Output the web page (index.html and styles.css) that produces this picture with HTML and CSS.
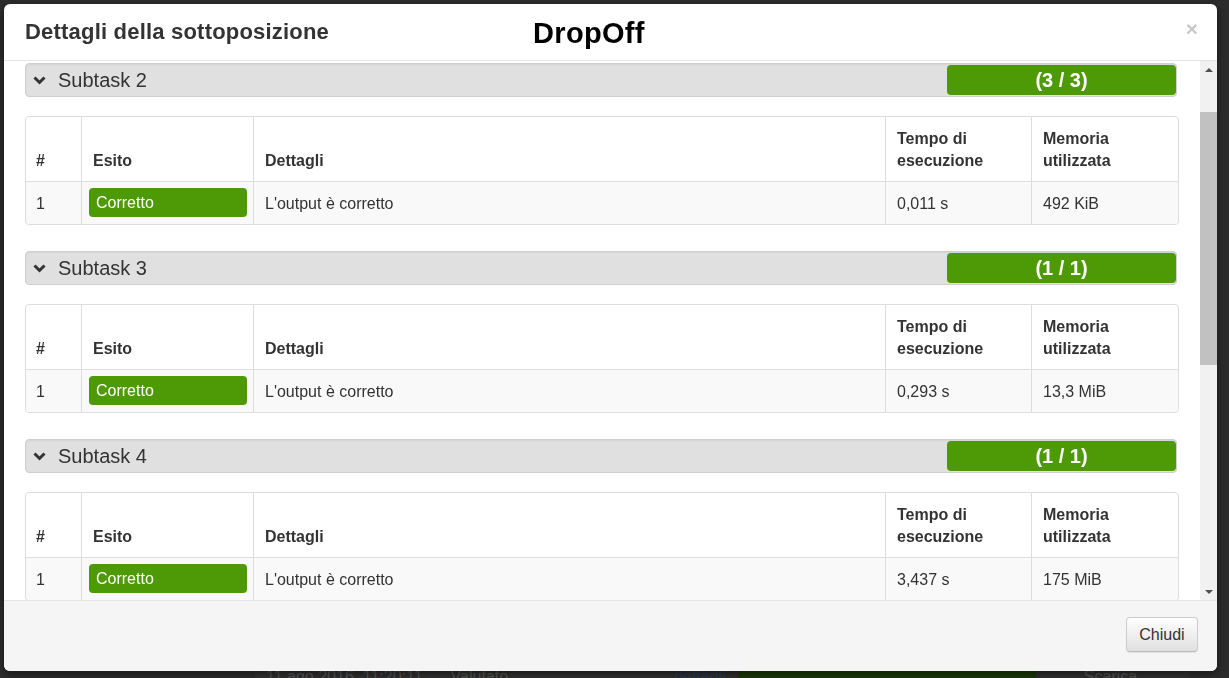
FILE: index.html
```html
<!DOCTYPE html>
<html lang="it">
<head>
<meta charset="utf-8">
<title>Dettagli della sottoposizione</title>
<link rel="stylesheet" href="styles.css">
</head>
<body>
<div class="page">
  <div class="page-row">
    <span class="pc pc-date">11 ago 2016, 11:20:11</span>
    <span class="pc pc-state">Valutato</span>
    <span class="pc pc-link">dettagli</span>
    <span class="pc pc-score"></span>
    <span class="pc pc-dl">Scarica</span>
  </div>
</div>

<div class="modal">
  <div class="modal-header">
    <h4 class="modal-title">Dettagli della sottoposizione</h4>
    <span class="task-name">DropOff</span>
    <button class="close" type="button">×</button>
  </div>

  <div class="modal-body-wrap">
    <div class="modal-body">

      <section class="subtask">
        <div class="subtask-head">
          <svg class="chev" viewBox="0 0 13 9" width="13" height="9"><polyline points="1.5,1.5 6.5,6.5 11.5,1.5" fill="none" stroke="#333" stroke-width="3"/></svg>
          <span class="subtask-title">Subtask 2</span>
          <span class="score">(3 / 3)</span>
        </div>
        <table class="tc">
          <colgroup><col class="c1"><col class="c2"><col class="c3"><col class="c4"><col class="c5"></colgroup>
          <thead><tr><th>#</th><th>Esito</th><th>Dettagli</th><th>Tempo di esecuzione</th><th>Memoria utilizzata</th></tr></thead>
          <tbody><tr><td>1</td><td class="lc"><span class="label">Corretto</span></td><td>L'output è corretto</td><td>0,011 s</td><td>492 KiB</td></tr></tbody>
        </table>
      </section>

      <section class="subtask">
        <div class="subtask-head">
          <svg class="chev" viewBox="0 0 13 9" width="13" height="9"><polyline points="1.5,1.5 6.5,6.5 11.5,1.5" fill="none" stroke="#333" stroke-width="3"/></svg>
          <span class="subtask-title">Subtask 3</span>
          <span class="score">(1 / 1)</span>
        </div>
        <table class="tc">
          <colgroup><col class="c1"><col class="c2"><col class="c3"><col class="c4"><col class="c5"></colgroup>
          <thead><tr><th>#</th><th>Esito</th><th>Dettagli</th><th>Tempo di esecuzione</th><th>Memoria utilizzata</th></tr></thead>
          <tbody><tr><td>1</td><td class="lc"><span class="label">Corretto</span></td><td>L'output è corretto</td><td>0,293 s</td><td>13,3 MiB</td></tr></tbody>
        </table>
      </section>

      <section class="subtask">
        <div class="subtask-head">
          <svg class="chev" viewBox="0 0 13 9" width="13" height="9"><polyline points="1.5,1.5 6.5,6.5 11.5,1.5" fill="none" stroke="#333" stroke-width="3"/></svg>
          <span class="subtask-title">Subtask 4</span>
          <span class="score">(1 / 1)</span>
        </div>
        <table class="tc">
          <colgroup><col class="c1"><col class="c2"><col class="c3"><col class="c4"><col class="c5"></colgroup>
          <thead><tr><th>#</th><th>Esito</th><th>Dettagli</th><th>Tempo di esecuzione</th><th>Memoria utilizzata</th></tr></thead>
          <tbody><tr><td>1</td><td class="lc"><span class="label">Corretto</span></td><td>L'output è corretto</td><td>3,437 s</td><td>175 MiB</td></tr></tbody>
        </table>
      </section>

    </div>
    <div class="scrollbar">
      <div class="sb-btn"><span class="arr-up"></span></div>
      <div class="sb-gap"></div>
      <div class="sb-thumb"></div>
      <div class="sb-rest"></div>
      <div class="sb-btn"><span class="arr-down"></span></div>
    </div>
  </div>

  <div class="modal-footer">
    <button class="btn" type="button">Chiudi</button>
  </div>
</div>
</body>
</html>
```

FILE: styles.css
```css
* { box-sizing: border-box; }

html, body {
  margin: 0;
  padding: 0;
  height: 100%;
}

body {
  background: #2c2c2c;
  font-family: "Liberation Sans", Arial, sans-serif;
  color: #333;
  overflow: hidden;
}

/* page behind the backdrop */
.page {
  height: 678px;
  display: flex;
  flex-direction: column;
  justify-content: flex-end;
}

.page-row {
  height: 12px;
  margin: 0 40px 0 255px;
  background: #303030;
  display: flex;
  align-items: center;
  font-size: 16px;
  color: #555;
  transform: translateY(5px);
}

.pc { white-space: nowrap; }
.pc-date { margin-left: 11px; }
.pc-state { margin-left: 28px; }
.pc-link { margin-left: 166px; color: #2a3b55; }
.pc-score { margin-left: 12px; width: 298px; height: 12px; background: #1d3a08; }
.pc-dl { margin-left: 48px; }

/* modal overlay */
.modal {
  position: fixed;
  left: 4px;
  top: 4px;
  width: 1213px;
  height: 667px;
  background: #fff;
  border-radius: 6px;
  display: flex;
  flex-direction: column;
  overflow: hidden;
  box-shadow: 0 3px 9px rgba(0, 0, 0, 0.5);
}

.modal-header {
  height: 57px;
  flex: none;
  display: flex;
  align-items: center;
  padding: 0 19px 0 21px;
  border-bottom: 1px solid #e5e5e5;
}

.modal-title {
  margin: 0;
  font-size: 22px;
  font-weight: bold;
  line-height: 24px;
  letter-spacing: 0.2px;
  color: #333;
}

.task-name {
  margin-left: 204px;
  font-size: 29px;
  font-weight: bold;
  letter-spacing: 0.3px;
  color: #000;
  line-height: 30px;
  margin-top: 2px;
}

.close {
  margin-left: auto;
  border: 0;
  background: none;
  padding: 0;
  font-family: "Liberation Sans", Arial, sans-serif;
  font-size: 21px;
  font-weight: bold;
  line-height: 20px;
  color: #c8c8c8;
  margin-top: -6px;
}

.modal-body-wrap {
  flex: 1;
  display: flex;
  min-height: 0;
}

.modal-body {
  flex: 1;
  overflow: hidden;
  padding: 2px 23px 0 21px;
}

.subtask { margin-bottom: 26px; }

.subtask-head {
  height: 34px;
  display: flex;
  align-items: center;
  background: #e0e0e0;
  border: 1px solid #cfcfcf;
  border-radius: 4px;
  box-shadow: inset 0 1px 2px rgba(0, 0, 0, 0.06);
  padding-left: 7px;
  margin-bottom: 19px;
}

.chev { flex: none; margin-top: 1px; }

.subtask-title {
  margin-left: 12px;
  font-size: 20px;
  color: #333;
}

.score {
  margin-left: auto;
  width: 229px;
  height: 30px;
  background: #4e9a06;
  border-radius: 4px;
  color: #fff;
  font-size: 20px;
  font-weight: bold;
  text-align: center;
  line-height: 30px;
}

.tc {
  width: 100%;
  table-layout: fixed;
  border-collapse: separate;
  border-spacing: 0;
  border: 1px solid #ddd;
  border-radius: 4px;
  font-size: 16px;
  line-height: 22px;
}

.c1 { width: 55px; }
.c2 { width: 172px; }
.c3 { width: 632px; }
.c4 { width: 146px; }
.c5 { width: 147px; }

.tc th, .tc td {
  padding: 11px 11px 9px 11px;
  text-align: left;
  border-left: 1px solid #ddd;
}

.tc th:first-child, .tc td:first-child {
  border-left: 0;
  padding-left: 10px;
}

.tc th {
  vertical-align: bottom;
  font-weight: bold;
  border-bottom: 1px solid #ddd;
  color: #333;
}

.tc tbody tr { background: #f9f9f9; }

.tc td { color: #333; vertical-align: middle; }

.tc td:first-child { border-bottom-left-radius: 4px; }
.tc td:last-child { border-bottom-right-radius: 4px; }

.tc td.lc { padding: 6px 6px 7px 7px; }

.label {
  display: block;
  height: 29px;
  line-height: 29px;
  padding: 0 7px;
  background: #4e9a06;
  border-radius: 4px;
  color: #fff;
  font-size: 16px;
}

/* drawn scrollbar */
.scrollbar {
  width: 17px;
  flex: none;
  background: #f1f1f1;
  display: flex;
  flex-direction: column;
}

.sb-btn {
  height: 17px;
  flex: none;
  display: flex;
  align-items: center;
  justify-content: center;
}

.arr-up {
  width: 0; height: 0;
  border-left: 4px solid transparent;
  border-right: 4px solid transparent;
  border-bottom: 4px solid #505050;
}

.arr-down {
  width: 0; height: 0;
  border-left: 4px solid transparent;
  border-right: 4px solid transparent;
  border-top: 4px solid #505050;
}

.sb-gap { height: 34px; flex: none; }
.sb-thumb { height: 253px; flex: none; background: #c1c1c1; }
.sb-rest { flex: 1; }

.modal-footer {
  height: 71px;
  flex: none;
  background: #f5f5f5;
  border-top: 1px solid #e5e5e5;
  display: flex;
  justify-content: flex-end;
  align-items: flex-start;
  padding: 16px 19px 0 0;
}

.btn {
  width: 72px;
  height: 35px;
  font-family: "Liberation Sans", Arial, sans-serif;
  font-size: 16px;
  color: #333;
  background: linear-gradient(#fff, #e0e0e0);
  border: 1px solid #ccc;
  border-bottom-color: #bbb;
  border-radius: 4px;
  box-shadow: inset 0 1px 0 rgba(255,255,255,.15), 0 1px 1px rgba(0,0,0,.075);
  padding: 0;
}
```
